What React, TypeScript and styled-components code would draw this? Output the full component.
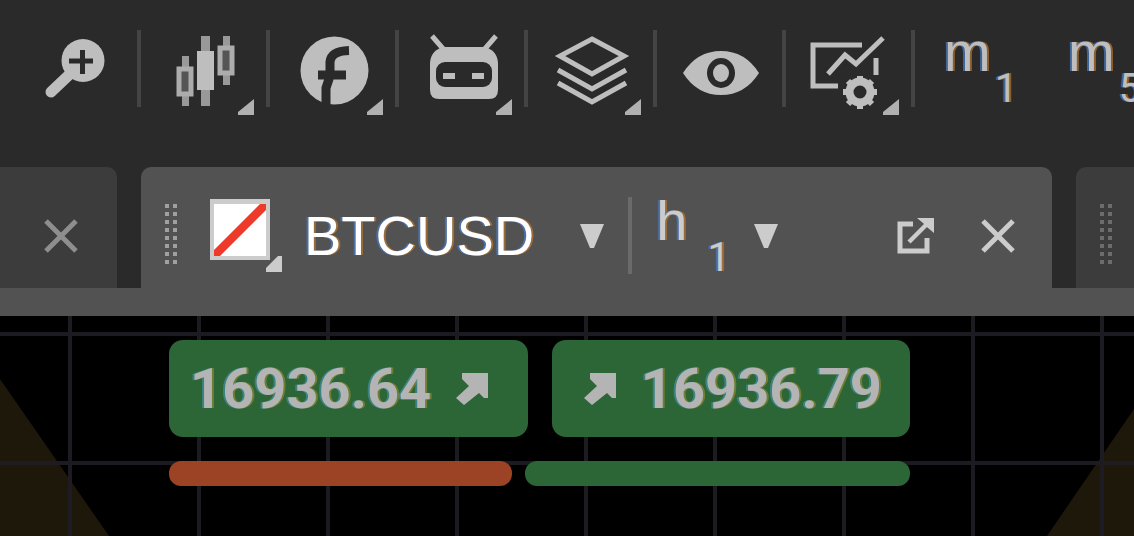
import React from "react";
import styled, { createGlobalStyle, css } from "styled-components";

const color = {
  bar: "#2a2a2a",
  tab: "#3c3c3c",
  active: "#525252",
  rule: "#444444",
  icon: "#bebebe",
  bright: "#cccccc",
  green: "#2c6637",
  red: "#9c4326",
  grid: "#1c1b22",
  watermark: "#1e180b",
};

const Global = createGlobalStyle`
  * { box-sizing: border-box; }
  body { margin: 0; background: #000; font-family: "Liberation Sans", Arial, sans-serif; }
  button { border: 0; padding: 0; background: none; color: inherit; font: inherit; cursor: pointer; }
  svg { display: block; }
`;

const fringe = css`
  text-shadow: -2px 0 rgba(75, 125, 200, 0.7), 2px 0 rgba(185, 120, 50, 0.7);
`;

const Page = styled.div`
  display: flex;
  flex-direction: column;
  min-height: 100vh;
  overflow: hidden;
`;

const Toolbar = styled.header`
  display: flex;
  align-items: flex-start;
  height: 167px;
  padding-top: 30px;
  background: ${color.bar};
  overflow: hidden;
`;

const ToolButton = styled.button<{ $wide?: boolean }>`
  flex: none;
  width: ${(p) => (p.$wide ? 137 : 125)}px;
`;

const Divider = styled.span<{ $light?: boolean }>`
  flex: none;
  width: 4px;
  height: 77px;
  background: ${(p) => (p.$light ? "#6a6a6a" : color.rule)};
`;

const ToolPeriod = styled.button`
  display: flex;
  flex: none;
  align-items: flex-start;
  width: 124px;
  margin-top: -6px;
  padding-left: 29px;
  color: ${color.icon};
`;

const Unit = styled.span<{ $gap: number }>`
  font-size: 56px;
  line-height: 56px;
  margin-right: ${(p) => p.$gap}px;
  ${fringe}
`;

const Count = styled.span`
  margin-top: 45px;
  font-family: Roboto, "Liberation Sans", sans-serif;
  font-size: 40px;
  line-height: 40px;
  ${fringe}
`;

const TabStrip = styled.nav`
  display: grid;
  grid-template-columns: 117px minmax(0, 1fr) 58px;
  column-gap: 24px;
  height: 149px;
  background: ${color.bar};
  border-bottom: 28px solid ${color.active};
`;

const Tab = styled.div<{ $active?: boolean; $side?: "left" | "right" }>`
  display: flex;
  align-items: center;
  padding: 16px 36px 0 24px;
  background: ${(p) => (p.$active ? color.active : color.tab)};
  color: ${(p) => (p.$active ? color.bright : "#8e8e8e")};
  border-radius: ${(p) => (p.$side === "left" ? "0 10px 0 0" : p.$side === "right" ? "10px 0 0 0" : "10px 10px 0 0")};
  ${(p) => p.$side === "left" && "justify-content: flex-end; padding-right: 38px;"}
`;

const Grip = styled.span<{ $dim?: boolean }>`
  flex: none;
  width: 12px;
  height: 60px;
  margin-bottom: 4px;
  background: repeating-linear-gradient(
      to bottom,
      transparent 0 4px,
      ${(p) => (p.$dim ? color.tab : color.active)} 4px 8px
    ),
    linear-gradient(
      to right,
      ${(p) => (p.$dim ? "#6c6c6c" : "#a0a0a0")} 4px,
      transparent 4px 8px,
      ${(p) => (p.$dim ? "#6c6c6c" : "#a0a0a0")} 8px
    );
`;

const Swatch = styled.button`
  margin: 0 22px 0 33px;
`;

const SymbolButton = styled.button`
  display: flex;
  align-items: center;
  gap: 46px;
  margin-right: 24px;
`;

const SymbolName = styled.span`
  color: #fff;
  font-size: 56px;
  line-height: 56px;
  ${fringe}
`;

const TabPeriod = styled.button`
  display: flex;
  align-items: center;
  gap: 24px;
  margin-left: 24px;
`;

const PeriodLabel = styled.span`
  display: flex;
  align-items: flex-start;
`;

const TabActions = styled.div`
  display: flex;
  align-items: center;
  gap: 46px;
  margin-left: auto;
`;

const Chart = styled.main`
  position: relative;
  z-index: 0;
  flex: 1;
  min-height: 220px;
  padding: 24px 224px 50px 169px;
  background-image: linear-gradient(to right, ${color.grid} 4px, transparent 4px),
    linear-gradient(to bottom, ${color.grid} 4px, transparent 4px),
    linear-gradient(#000, #000);
  background-size: 129px 129px, 129px 129px, auto;
  background-position: 68px 16px, 68px 16px, 0 0;
`;

const Watermark = styled.svg<{ $right?: boolean }>`
  position: absolute;
  z-index: -1;
  top: 0;
  mix-blend-mode: lighten;
  ${(p) => (p.$right ? "right: 0;" : "left: 0;")}
`;

const Quotes = styled.div`
  display: grid;
  grid-template-columns: 1fr 1fr;
  gap: 24px;
`;

const Quote = styled.button`
  display: flex;
  align-items: center;
  justify-content: space-between;
  height: 97px;
  padding: 0 28px 0 31px;
  border-radius: 14px;
  background: ${color.green};
  color: #b4b4b4;
`;

const BidQuote = styled(Quote)`
  padding: 0 36px 0 21px;
`;

const Price = styled.span`
  font-family: Roboto, "Liberation Sans", sans-serif;
  font-size: 56px;
  font-weight: 700;
  line-height: 60px;
  text-shadow: -2px 0 rgba(70, 150, 180, 0.6), 2px 0 rgba(180, 150, 50, 0.5);
`;

const Sentiment = styled.div`
  display: flex;
  gap: 13px;
  margin-top: 24px;
`;

const Share = styled.span<{ $tone: string; $share: number }>`
  flex: ${(p) => p.$share} 1 0;
  height: 25px;
  border-radius: 12px;
  background: ${(p) => p.$tone};
`;

function ToolIcon({ menu, wide, children }: { menu?: boolean; wide?: boolean; children: React.ReactNode }) {
  const w = wide ? 137 : 125;
  return (
    <svg width={w} height="90" viewBox={`0 0 ${w} 90`} fill={color.icon} aria-hidden="true">
      {children}
      {menu && <path d="M113 69v16H97v-3z" fill="#b0b0b0" />}
    </svg>
  );
}

const ZoomIcon = () => (
  <ToolIcon wide>
    <path d="M51 62 70 44" stroke={color.icon} strokeWidth="11" strokeLinecap="round" />
    <circle cx="83" cy="30.500" r="21.500" />
    <path d="M69 31h24M82.500 20v24" stroke={color.bar} strokeWidth="5" />
  </ToolIcon>
);

const CandlesIcon = () => (
  <ToolIcon menu>
    <path d="M41 26h7v50h-7zM60 6h9v70h-9zM82 6h7v49h-7z" fill="#999" />
    <rect x="56" y="21" width="17" height="39" />
    <rect x="38" y="39" width="12" height="25" fill="#555" stroke="#acacac" strokeWidth="5" />
    <rect x="79" y="18" width="12" height="25" fill="#555" stroke="#acacac" strokeWidth="5" />
  </ToolIcon>
);

const FacebookIcon = () => (
  <ToolIcon menu>
    <circle cx="64.500" cy="40.500" r="34" />
    <path d="M56 78V58L60 46V32Q61 21 79 20.500M48 45h28" fill="none" stroke={color.bar} strokeWidth="9" />
  </ToolIcon>
);

const RobotIcon = () => (
  <ToolIcon menu>
    <path d="M33 6 46 21M97 6 84 21" stroke={color.icon} strokeWidth="5" />
    <path d="M46 17h38q14 2 15 16v27q0 9-9 9H40q-9 0-9-9V33q1-14 15-16z" />
    <rect x="37" y="32" width="56" height="25" rx="9" fill={color.bar} />
    <path d="M44 43h12v6H44zM73 43h12v6H73z" />
  </ToolIcon>
);

const LayersIcon = () => (
  <ToolIcon menu>
    <g fill="none" stroke={color.icon} strokeWidth="5">
      <path d="M64 9 96 26 64 44 32 26z" />
      <path d="M30 40 64 59 98 40M30 53 64 72 98 53" />
    </g>
  </ToolIcon>
);

const EyeIcon = () => (
  <ToolIcon>
    <path d="M26 43Q40 21 64 21T102 43Q88 65 64 65T26 43z" />
    <ellipse cx="64" cy="43" rx="14" ry="15" fill={color.bar} />
    <ellipse cx="64" cy="43" rx="8" ry="9" />
  </ToolIcon>
);

const ChartSettingsIcon = () => (
  <ToolIcon menu>
    <g fill="none" stroke={color.icon}>
      <path d="M76 15H27V56H52M90 28V45" strokeWidth="5" />
      <path d="M42 44 59 25 70 34 97 8" strokeWidth="5" />
      <circle cx="74" cy="62" r="10.500" strokeWidth="8" />
      <path
        d="M74 46v6M74 73v6M57 62h6M85 62h6M62 51l4 4M82 70l4 4M86 51l-4 4M66 70l-4 4"
        strokeWidth="6"
      />
    </g>
  </ToolIcon>
);

const Caret = () => (
  <svg width="24" height="24" viewBox="0 0 24 24" fill={color.bright} aria-hidden="true">
    <path d="M0 0h24L14 24h-4z" />
  </svg>
);

const CloseIcon = () => (
  <svg width="36" height="36" viewBox="0 0 36 36" stroke="currentColor" strokeWidth="5" aria-hidden="true">
    <path d="M3 3 33 33M33 3 3 33" />
  </svg>
);

const PopOutIcon = () => (
  <svg width="37" height="37" viewBox="0 0 37 37" fill="none" stroke="currentColor" aria-hidden="true">
    <path d="M16 7H3V34H30V21" strokeWidth="5" />
    <path d="M12 25 30 7" strokeWidth="4.500" />
    <path d="M20 1H37V16L31 11 26 6z" fill="currentColor" stroke="none" />
  </svg>
);

const SwatchIcon = () => (
  <svg width="72" height="73" viewBox="0 0 72 73" aria-hidden="true">
    <rect width="60" height="61" fill={color.bright} />
    <path d="M4 5h52v52H4z" fill="#fff" />
    <path d="M4 57v-6L50 5h6v6L10 57z" fill="#ee3a2b" />
    <path d="M72 57v16H56v-4L68 57z" fill={color.bright} />
  </svg>
);

const TrendArrow = () => (
  <svg width="37" height="36" viewBox="0 0 37 36" fill="currentColor" aria-hidden="true">
    <path d="M7 2H33V27H29L24 22 9 34 1 27 14 15 7 8z" />
  </svg>
);

function Period({ unit, count, gap }: { unit: string; count: number; gap: number }) {
  return (
    <>
      <Unit $gap={gap}>{unit}</Unit>
      <Count>{count}</Count>
    </>
  );
}

const tools = [
  { label: "Chart type", Icon: CandlesIcon },
  { label: "Indicators", Icon: FacebookIcon },
  { label: "Robots", Icon: RobotIcon },
  { label: "Objects", Icon: LayersIcon },
  { label: "Visibility", Icon: EyeIcon },
  { label: "Chart settings", Icon: ChartSettingsIcon },
];

export default function App() {
  return (
    <Page>
      <Global />
      <Toolbar>
        <ToolButton $wide aria-label="Zoom in">
          <ZoomIcon />
        </ToolButton>
        <Divider />
        {tools.map(({ label, Icon }) => (
          <React.Fragment key={label}>
            <ToolButton aria-label={label}>
              <Icon />
            </ToolButton>
            <Divider />
          </React.Fragment>
        ))}
        <ToolPeriod>
          <Period unit="m" count={1} gap={4} />
        </ToolPeriod>
        <ToolPeriod>
          <Period unit="m" count={5} gap={4} />
        </ToolPeriod>
      </Toolbar>

      <TabStrip>
        <Tab $side="left">
          <button aria-label="Close previous tab">
            <CloseIcon />
          </button>
        </Tab>
        <Tab $active>
          <Grip />
          <Swatch aria-label="Link color">
            <SwatchIcon />
          </Swatch>
          <SymbolButton aria-haspopup="listbox">
            <SymbolName>BTCUSD</SymbolName>
            <Caret />
          </SymbolButton>
          <Divider $light />
          <TabPeriod aria-haspopup="listbox">
            <PeriodLabel>
              <Period unit="h" count={1} gap={20} />
            </PeriodLabel>
            <Caret />
          </TabPeriod>
          <TabActions>
            <button aria-label="Detach">
              <PopOutIcon />
            </button>
            <button aria-label="Close">
              <CloseIcon />
            </button>
          </TabActions>
        </Tab>
        <Tab $side="right">
          <Grip $dim />
        </Tab>
      </TabStrip>

      <Chart>
        <Watermark width="110" height="220" viewBox="0 0 110 220" aria-hidden="true">
          <path d="M0 63 109 220H0z" fill={color.watermark} />
        </Watermark>
        <Watermark $right width="88" height="220" viewBox="0 0 88 220" aria-hidden="true">
          <path d="M88 93V220H1z" fill={color.watermark} />
        </Watermark>
        <Quotes>
          <BidQuote>
            <Price>16936.64</Price>
            <TrendArrow />
          </BidQuote>
          <Quote>
            <TrendArrow />
            <Price>16936.79</Price>
          </Quote>
        </Quotes>
        <Sentiment>
          <Share $tone={color.red} $share={343} />
          <Share $tone={color.green} $share={385} />
        </Sentiment>
      </Chart>
    </Page>
  );
}
